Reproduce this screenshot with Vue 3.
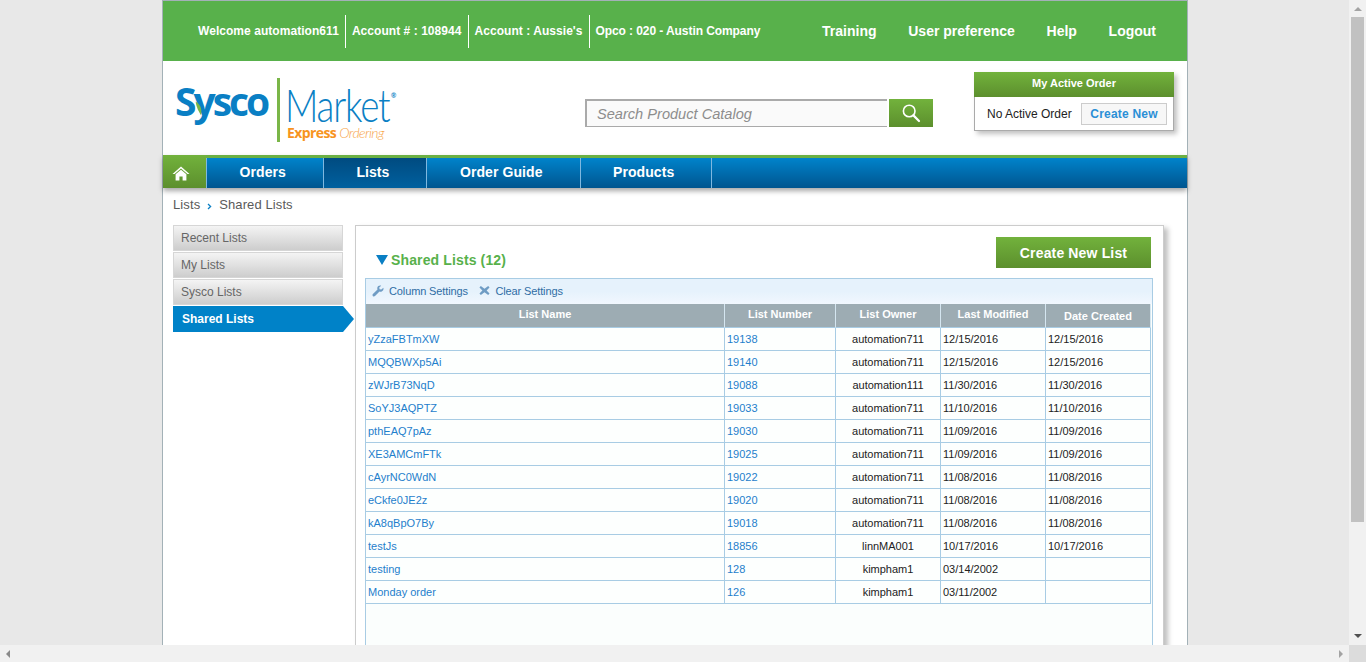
<script setup>
const accountInfo = [
  "Welcome automation611",
  "Account # : 108944",
  "Account : Aussie's",
  "Opco : 020 - Austin Company",
];
const topLinks = ["Training", "User preference", "Help", "Logout"];
const navItems = [
  { label: "Orders" },
  { label: "Lists", active: true },
  { label: "Order Guide" },
  { label: "Products" },
];
const sideItems = [
  { label: "Recent Lists" },
  { label: "My Lists" },
  { label: "Sysco Lists" },
  { label: "Shared Lists", active: true },
];
const rows = [
  ["yZzaFBTmXW", "19138", "automation711", "12/15/2016", "12/15/2016"],
  ["MQQBWXp5Ai", "19140", "automation711", "12/15/2016", "12/15/2016"],
  ["zWJrB73NqD", "19088", "automation111", "11/30/2016", "11/30/2016"],
  ["SoYJ3AQPTZ", "19033", "automation711", "11/10/2016", "11/10/2016"],
  ["pthEAQ7pAz", "19030", "automation711", "11/09/2016", "11/09/2016"],
  ["XE3AMCmFTk", "19025", "automation711", "11/09/2016", "11/09/2016"],
  ["cAyrNC0WdN", "19022", "automation711", "11/08/2016", "11/08/2016"],
  ["eCkfe0JE2z", "19020", "automation711", "11/08/2016", "11/08/2016"],
  ["kA8qBpO7By", "19018", "automation711", "11/08/2016", "11/08/2016"],
  ["testJs", "18856", "linnMA001", "10/17/2016", "10/17/2016"],
  ["testing", "128", "kimpham1", "03/14/2002", ""],
  ["Monday order", "126", "kimpham1", "03/11/2002", ""],
];
</script>

<template>
  <div class="viewport">
    <div class="canvas">
      <div class="page">
        <div class="topbar">
          <div class="account">
            <span v-for="item in accountInfo" :key="item" class="account-item">{{ item }}</span>
          </div>
          <div class="top-links">
            <a v-for="link in topLinks" :key="link">{{ link }}</a>
          </div>
        </div>

        <div class="header">
          <div class="logo">
            <div class="logo-sysco">
              <span>Sysco</span>
              <svg class="leaf" viewBox="0 0 12 22" width="8" height="15">
                <path d="M1 1C7 4 11 10 9 21C6 17 2 9 1 1Z" fill="#7ab648" />
              </svg>
            </div>
            <div class="logo-rule"></div>
            <div class="logo-market">
              <div class="market-word">Market<sup>®</sup></div>
              <div class="express"><b>Express</b> <i>Ordering</i></div>
            </div>
          </div>

          <div class="search">
            <div class="search-input">Search Product Catalog</div>
            <button class="search-btn">
              <svg viewBox="0 0 20 20" width="20" height="20">
                <circle cx="8.2" cy="8" r="5.8" fill="none" stroke="#fff" stroke-width="1.6" />
                <path d="M12.4 12.4L18 18" stroke="#fff" stroke-width="2.2" stroke-linecap="round" />
              </svg>
            </button>
          </div>

          <div class="active-order">
            <div class="active-head">My Active Order</div>
            <div class="active-body">
              <span>No Active Order</span>
              <button class="create-new">Create New</button>
            </div>
          </div>
        </div>

        <div class="nav">
          <div class="nav-home">
            <svg viewBox="0 0 18 15" width="18" height="15">
              <path d="M9 0.5L0.5 8H2.6L9 2.6L15.4 8H17.5Z" fill="#fff" />
              <path d="M3.6 8.2L9 3.8L14.4 8.2V14.5H10.6V10.4H7.4V14.5H3.6Z" fill="#fff" />
            </svg>
          </div>
          <div
            v-for="item in navItems"
            :key="item.label"
            class="nav-item"
            :class="{ active: item.active }"
          >
            {{ item.label }}
          </div>
        </div>

        <div class="crumbs">
          <span>Lists</span>
          <svg class="crumb-arrow" viewBox="0 0 5 7" width="5" height="7">
            <path d="M1 1L3.6 3.5L1 6" fill="none" stroke="#0a7fc4" stroke-width="1.3" />
          </svg>
          <span>Shared Lists</span>
        </div>

        <div class="content">
          <div class="sidebar">
            <div
              v-for="item in sideItems"
              :key="item.label"
              class="side-item"
              :class="{ active: item.active }"
            >
              {{ item.label }}
            </div>
          </div>

          <div class="panel">
            <div class="panel-head">
              <h2 class="panel-title"><span class="tri"></span>Shared Lists (12)</h2>
              <button class="create-list">Create New List</button>
            </div>

            <div class="grid">
              <div class="toolbar">
                <span class="tool">
                  <svg viewBox="0 0 12 12" width="12" height="12">
                    <path d="M11.4 2.8L9.3 4.6L7.6 4.2L7.2 2.6L9.2 0.7C7.6 0.1 5.6 1 5.3 2.8C5.2 3.5 5.3 4.1 5.5 4.6L0.9 9.1C0.3 9.7 0.4 10.7 1 11.2C1.6 11.7 2.4 11.7 3 11.1L7.5 6.6C8 6.8 8.7 6.9 9.3 6.7C11 6.3 11.9 4.5 11.4 2.8Z" fill="#6f9cc4" />
                  </svg>
                  Column Settings
                </span>
                <span class="tool">
                  <svg viewBox="0 0 12 12" width="11" height="11">
                    <path d="M2 1L6 4L10 1L11.5 2.6L8.3 6L11.5 9.4L10 11L6 8L2 11L0.5 9.4L3.7 6L0.5 2.6Z" fill="#6f9cc4" />
                  </svg>
                  Clear Settings
                </span>
              </div>
              <table class="lists">
                <colgroup>
                  <col style="width: 359px" />
                  <col style="width: 111px" />
                  <col style="width: 105px" />
                  <col style="width: 105px" />
                  <col style="width: 105px" />
                </colgroup>
                <thead>
                  <tr>
                    <th>List Name</th>
                    <th>List Number</th>
                    <th>List Owner</th>
                    <th>Last Modified</th>
                    <th class="low">Date Created</th>
                  </tr>
                </thead>
                <tbody>
                  <tr v-for="row in rows" :key="row[1]">
                    <td class="link">{{ row[0] }}</td>
                    <td class="link">{{ row[1] }}</td>
                    <td class="owner">{{ row[2] }}</td>
                    <td>{{ row[3] }}</td>
                    <td>{{ row[4] }}</td>
                  </tr>
                </tbody>
              </table>
            </div>
          </div>
        </div>
      </div>
    </div>

    <div class="scroll-y">
      <span class="arrow up"></span>
      <div class="thumb"></div>
      <span class="arrow down"></span>
    </div>
    <div class="scroll-x">
      <span class="arrow left"></span>
      <span class="arrow right"></span>
    </div>
    <div class="corner"></div>
  </div>
</template>

<style scoped>
.viewport {
  display: grid;
  grid-template-columns: 1349px 17px;
  grid-template-rows: 645px 17px;
  width: 1366px;
  height: 662px;
  overflow: hidden;
  background: #e8e8e8;
  font-family: "Liberation Sans", Arial, sans-serif;
}

.canvas {
  overflow: hidden;
  padding-left: 162px;
}

.page {
  width: 1024px;
  height: 660px;
  background: #fff;
  border: 1px solid #a3b1b7;
  border-bottom: 0;
}

.topbar {
  display: flex;
  justify-content: space-between;
  align-items: center;
  height: 60px;
  background: #58b14b;
  color: #fff;
  font-weight: bold;
  padding: 0 31px 0 29px;
}

.account {
  display: flex;
  font-size: 12px;
  letter-spacing: 0.05px;
}

.account-item {
  display: flex;
  align-items: center;
  height: 33px;
  padding: 0 6px;
  border-right: 1px solid #fff;
}

.account-item:last-child {
  border-right: 0;
  letter-spacing: -0.08px;
}

.top-links {
  display: flex;
  gap: 31.7px;
  font-size: 14px;
}

.header {
  display: flex;
  height: 94px;
}

.logo {
  display: flex;
  align-items: flex-start;
  width: 422px;
  padding: 17px 0 0 12px;
  box-sizing: border-box;
}

.logo-sysco {
  position: relative;
  width: 102px;
  margin-top: -3px;
  font-family: "Open Sans", sans-serif;
  font-weight: 700;
  font-size: 39px;
  line-height: 52px;
  letter-spacing: -3px;
  color: #0a7fc4;
}

.leaf {
  position: absolute;
  left: 20px;
  top: 26px;
}

.logo-rule {
  width: 3px;
  height: 64px;
  background: #7ab648;
}

.logo-market {
  margin: 4px 0 0 5px;
}

.market-word {
  font-family: Lato, sans-serif;
  font-weight: 300;
  font-size: 46px;
  line-height: 46px;
  color: #0a7fc4;
  letter-spacing: -1.5px;
  transform: scaleX(0.8);
  transform-origin: left center;
  white-space: nowrap;
}

.market-word sup {
  font-size: 8px;
  font-weight: 700;
  line-height: 0;
  vertical-align: 24px;
  margin-left: 2px;
}

.express {
  font-family: "Open Sans", sans-serif;
  font-size: 14px;
  line-height: 16px;
  color: #f7941e;
  letter-spacing: -0.6px;
  margin: -3px 0 0 2px;
}

.express i {
  font-family: Lato, sans-serif;
  font-weight: 300;
  opacity: 0.85;
}

.search {
  display: flex;
  gap: 2px;
  height: 28px;
  margin-top: 38px;
}

.search-input {
  width: 290px;
  height: 23px;
  padding: 2px 0 0 10px;
  border: 2px solid #aaa;
  border-right: 0;
  border-bottom-width: 1px;
  background: #fafafa;
  color: #8d8d8d;
  font-size: 14.6px;
  font-style: italic;
  line-height: 22px;
}

.search-btn {
  display: flex;
  align-items: center;
  justify-content: center;
  width: 44px;
  height: 28px;
  padding: 0;
  border: 0;
  background: linear-gradient(#72b23c, #5c8f2d);
}

.active-order {
  width: 198px;
  height: 58px;
  margin: 11px 0 0 41px;
  border: 1px solid #aaa;
  border-top: 0;
  box-shadow: 3px 3px 5px rgba(0, 0, 0, 0.25);
  background: #fff;
}

.active-head {
  height: 25px;
  margin: 0 -1px;
  background: linear-gradient(#72b23c, #5c8f2d);
  color: #fff;
  font-size: 11px;
  font-weight: bold;
  line-height: 23px;
  text-align: center;
}

.active-body {
  display: flex;
  align-items: center;
  justify-content: space-between;
  height: 33px;
  padding: 0 6px 0 12px;
  font-size: 12px;
  color: #222;
}

.create-new {
  width: 86px;
  height: 22px;
  padding: 0;
  border: 1px solid #ccc;
  background: #f7f7f7;
  color: #2b8fd6;
  font: bold 12px "Liberation Sans", Arial, sans-serif;
  letter-spacing: 0.2px;
}

.nav {
  display: flex;
  height: 30px;
  border-top: 3px solid #6cb043;
  background: linear-gradient(#0083cb, #00558f);
  box-shadow: 0 3px 5px rgba(0, 0, 0, 0.35);
  position: relative;
}

.nav-home {
  display: flex;
  align-items: center;
  justify-content: center;
  box-sizing: border-box;
  width: 43px;
  margin-top: -3px;
  padding: 3px 7px 0 0;
  background: linear-gradient(#72b23c, #5c8f2d);
}

.nav-item {
  padding: 0 37px 0 32.5px;
  border-left: 1px solid #7fb8e0;
  color: #fff;
  font-size: 14px;
  font-weight: bold;
  line-height: 28px;
  letter-spacing: 0.08px;
}

.nav-item:last-child {
  border-right: 1px solid #7fb8e0;
}

.nav-item.active {
  background: linear-gradient(#004b80, #00609f);
}

.crumbs {
  display: flex;
  align-items: center;
  gap: 7px;
  height: 33px;
  margin-bottom: 4px;
  padding-left: 10px;
  font-size: 13px;
  color: #5a5a5a;
  letter-spacing: 0.1px;
}

.crumb-arrow {
  margin-top: 3px;
}

.content {
  display: flex;
}

.sidebar {
  width: 170px;
  margin-left: 10px;
}

.side-item {
  height: 24px;
  margin-bottom: 1px;
  padding-left: 7px;
  border: 1px solid #d6d6d6;
  background: linear-gradient(#f4f4f4, #cdcdcd);
  color: #666;
  font-size: 12px;
  line-height: 25px;
}

.side-item.active {
  position: relative;
  height: 26px;
  margin-bottom: 0;
  padding-left: 9px;
  border: 0;
  background: #0082c8;
  color: #fff;
  font-weight: bold;
  line-height: 26px;
}

.side-item.active::after {
  content: "";
  position: absolute;
  left: 170px;
  top: 0;
  border-left: 11px solid #0082c8;
  border-top: 13px solid transparent;
  border-bottom: 13px solid transparent;
}

.panel {
  width: 807px;
  height: 430px;
  margin-left: 12px;
  border: 1px solid #ccc;
  box-shadow: 4px 3px 5px rgba(0, 0, 0, 0.25);
  background: #fff;
}

.panel-head {
  display: flex;
  justify-content: space-between;
  box-sizing: border-box;
  height: 52px;
  padding: 11px 12px 0 20px;
}

.panel-title {
  display: flex;
  align-items: center;
  gap: 3px;
  height: 21px;
  margin: 12px 0 0;
  color: #58b14b;
  font-size: 14px;
  font-weight: bold;
  letter-spacing: 0.13px;
}

.tri {
  width: 0;
  height: 0;
  margin-top: 1px;
  border-top: 10px solid #0a7fc4;
  border-left: 6px solid transparent;
  border-right: 6px solid transparent;
}

.create-list {
  width: 155px;
  height: 31px;
  padding: 0;
  border: 0;
  background: linear-gradient(#72b23c, #5c8f2d);
  color: #fff;
  font: bold 14px "Liberation Sans", Arial, sans-serif;
  letter-spacing: 0.15px;
}

.grid {
  width: 786px;
  height: 400px;
  margin-left: 9px;
  border: 1px solid #a8cce4;
  background: #fbfefd;
}

.toolbar {
  display: flex;
  align-items: center;
  gap: 11.5px;
  box-sizing: border-box;
  height: 25px;
  padding: 0 0 2px 6px;
  background: linear-gradient(#e6f2fc 50%, #f1f7fe);
  color: #2f6da5;
  font-size: 11px;
  letter-spacing: -0.12px;
}

.tool {
  display: flex;
  align-items: center;
  gap: 5px;
}

.lists {
  width: 785px;
  table-layout: fixed;
  border-collapse: separate;
  border-spacing: 0;
  font-size: 11px;
}

.lists th {
  box-sizing: border-box;
  height: 24px;
  padding: 4px 0 0;
  vertical-align: top;
  background: #9dacb3;
  border-right: 1px solid #d5e6f0;
  border-bottom: 1px solid #a8cce4;
  color: #fff;
  font-weight: bold;
}

.lists th.low {
  padding-top: 6px;
}

.lists td {
  box-sizing: border-box;
  height: 23px;
  padding: 0 0 0 2px;
  border-right: 1px solid #a8cce4;
  border-bottom: 1px solid #a8cce4;
  background: #fdfffe;
  color: #222;
}

.lists td.link {
  color: #1f80cc;
}

.lists td.owner {
  padding: 0;
  text-align: center;
}

.scroll-y {
  display: flex;
  flex-direction: column;
  align-items: center;
  grid-row: 1;
  grid-column: 2;
  background: #f1f1f1;
}

.thumb {
  flex-shrink: 0;
  width: 13px;
  height: 505px;
  margin-top: 6px;
  background: #c1c1c1;
}

.arrow {
  display: block;
  width: 0;
  height: 0;
  border-style: solid;
  border-color: transparent;
}

.arrow.up {
  margin-top: 7px;
  border-width: 0 4px 4px;
  border-bottom-color: #a3a3a3;
}

.arrow.down {
  margin-top: 112px;
  border-width: 4px 4px 0;
  border-top-color: #505050;
}

.scroll-x {
  display: flex;
  align-items: center;
  justify-content: space-between;
  grid-row: 2;
  grid-column: 1;
  padding: 0 6px;
  background: #f1f1f1;
}

.arrow.left {
  border-width: 4px 4px 4px 0;
  border-right-color: #8a8a8a;
}

.arrow.right {
  border-width: 4px 0 4px 4px;
  border-left-color: #a3a3a3;
}

.corner {
  background: #dcdcdc;
}
</style>
